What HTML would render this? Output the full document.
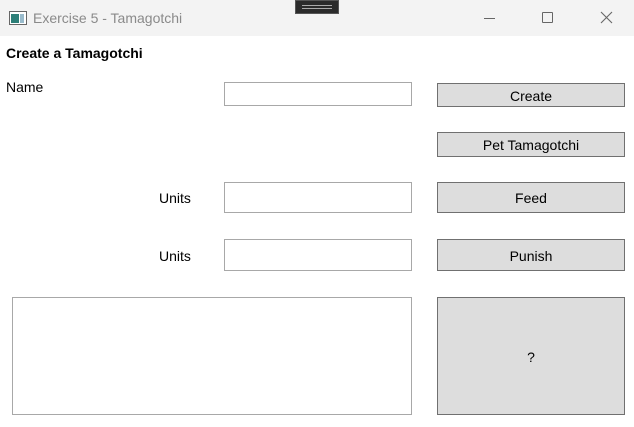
<!DOCTYPE html>
<html><head><style>
*{margin:0;padding:0;box-sizing:border-box}
body{width:634px;height:427px;background:#fff;font-family:"Segoe UI","Liberation Sans",sans-serif;font-size:14px;color:#000;position:relative;overflow:hidden}
.tb{position:absolute;left:0;top:0;width:634px;height:36px;background:#f3f3f3}
.a{position:absolute}
.box{position:absolute;border:1px solid #a8a8a8;background:#fff}
.btn{position:absolute;border:1px solid #707070;background:#dddddd;display:flex;align-items:center;justify-content:center;font-size:14px;padding-top:1px}
</style></head><body>
<div class="tb"></div>
<div class="a" style="left:295px;top:0;width:44px;height:14px;background:#2b2b2b;border:1px solid #555"></div>
<div class="a" style="left:302px;top:5px;width:30px;height:1px;background:#aaa"></div>
<div class="a" style="left:302px;top:8px;width:30px;height:1px;background:#aaa"></div>
<svg class="a" style="left:9px;top:11px" width="18" height="14"><rect x="0.5" y="0.5" width="17" height="13" fill="#fff" stroke="#666"/><rect x="2" y="3" width="8" height="9" fill="#2d7f78"/><rect x="11" y="3" width="4" height="9" fill="#9bc"/></svg>
<div class="a" style="left:33px;top:10px;color:#8a8a8a;font-size:14px">Exercise 5 - Tamagotchi</div>
<div class="a" style="left:484px;top:18px;width:11px;height:1px;background:#666"></div>
<div class="a" style="left:542px;top:12px;width:11px;height:11px;border:1px solid #666;border-radius:1px"></div>
<svg class="a" style="left:600px;top:11px" width="13" height="13"><path d="M1 1L12 12M12 1L1 12" stroke="#666" stroke-width="1.1"/></svg>
<div class="a" style="left:6px;top:45px;font-weight:bold">Create a Tamagotchi</div>
<div class="a" style="left:6px;top:79px">Name</div>
<div class="box" style="left:224px;top:82px;width:188px;height:24px"></div>
<div class="btn" style="left:437px;top:83px;width:188px;height:24px">Create</div>
<div class="btn" style="left:437px;top:132px;width:188px;height:25px">Pet Tamagotchi</div>
<div class="a" style="left:159px;top:190px">Units</div>
<div class="box" style="left:224px;top:182px;width:188px;height:31px"></div>
<div class="btn" style="left:437px;top:182px;width:188px;height:31px">Feed</div>
<div class="a" style="left:159px;top:248px">Units</div>
<div class="box" style="left:224px;top:239px;width:188px;height:32px"></div>
<div class="btn" style="left:437px;top:239px;width:188px;height:32px">Punish</div>
<div class="box" style="left:12px;top:297px;width:400px;height:118px"></div>
<div class="btn" style="left:437px;top:297px;width:188px;height:118px">?</div>
</body></html>
